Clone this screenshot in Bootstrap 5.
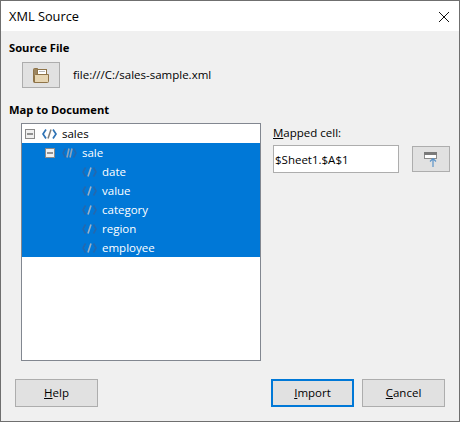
<!DOCTYPE html>
<html lang="en">
<head>
<meta charset="utf-8">
<title>XML Source</title>
<link href="https://cdn.jsdelivr.net/npm/bootstrap@5.3.0/dist/css/bootstrap.min.css" rel="stylesheet">
<style>
html, body { height: 100%; margin: 0; }
body { font-family: "Open Sans", "Noto Sans", "Liberation Sans", sans-serif; font-size: 11.5px; color: #000; background: #f0f0f0; }
.win { width: 460px; height: 422px; border: 1px solid #6f6f6f; background: #f0f0f0; overflow: hidden; }
.titlebar { height: 30px; flex: none; background: #fff; padding-left: 8px; padding-right: 9px; padding-top: 1px; font-size: 12.8px; }
.body-area { height: 389px; padding: 0 9px 0 8px; }
.sect { font-weight: 700; font-size: 11.2px; height: 19px; line-height: 19px; }
.sect-1 { margin-top: 7px; }
.sect-2 { margin-top: 12px; }
.tool-btn { width: 38px; height: 26px; flex: none; background: #e1e1e1; border: 1px solid #adadad; padding: 0; border-radius: 0; }
.file-row { height: 26px; margin-top: 5px; padding-left: 13px; gap: 13px; }
.main-row { margin-top: 4px; padding-left: 12px; }
.tree { width: 240px; height: 238px; flex: none; background: #fff; border: 1px solid #828790; }
.t-row { height: 19px; line-height: 18px; white-space: nowrap; }
.t-sel { background: #0078d7; color: #fff; }
.t-0 { padding-left: 3px; }
.t-1 { padding-left: 23px; }
.t-2 { padding-left: 60px; }
.exp { width: 10px; height: 10px; margin-right: 7px; flex: none; }
.ico { width: 15px; height: 12px; margin-right: 5px; flex: none; }
.side { margin-left: 12px; width: 177px; flex: none; }
.lbl { height: 19px; line-height: 19px; }
.cell-row { margin-top: 3px; gap: 13px; }
.cell-input { width: 126px; height: 28px; flex: none; border: 1px solid #adadad; border-radius: 0; padding: 0 1px; font-size: 11.5px; line-height: 26px; color: #000; background: #fff; box-shadow: none; }
.cell-btn { margin-top: 1px; }
.foot { margin-top: 18px; padding-left: 6px; padding-right: 5px; }
.dlg-btn { width: 83px; height: 28px; background: #e1e1e1; border: 1px solid #adadad; border-radius: 0; padding: 0; font-size: 11.5px; color: #000; line-height: 24px; }
.dlg-def { border: 2px solid #0078d7; }
.dlg-gap { gap: 8px; }
</style>
</head>
<body>
<div class="win d-flex flex-column">
  <div class="titlebar d-flex align-items-center justify-content-between">
    <span>XML Source</span>
    <svg width="12" height="12" viewBox="0 0 12 12" aria-hidden="true"><path d="M1 1l10 10M11 1L1 11" stroke="#111" stroke-width="1" fill="none"/></svg>
  </div>
  <div class="body-area">
    <div class="sect sect-1">Source File</div>
    <div class="file-row d-flex align-items-center">
      <button type="button" class="tool-btn d-flex align-items-center justify-content-center" aria-label="Browse">
        <svg width="16" height="15" viewBox="0 0 16 15" aria-hidden="true">
          <path d="M.5 1.500a1 1 0 0 1 1-1h3l1 1v13h-4a1 1 0 0 1-1-1z" fill="#9c8560" stroke="#8f7448"/>
          <rect x="4.500" y="1.500" width="9" height="5" fill="#fff" stroke="#8f7448"/>
          <path d="M6 3.500h6" stroke="#b9b9b9"/>
          <path d="M2.500 6.500h13v7a1 1 0 0 1-1 1h-13v-7z" fill="#e6d5b2" stroke="#8f7448"/>
        </svg>
      </button>
      <span>file:///C:/sales-sample.xml</span>
    </div>
    <div class="sect sect-2">Map to Document</div>
    <div class="main-row d-flex">
      <div class="tree">
        <div class="t-row t-0 d-flex align-items-center">
          <svg class="exp" viewBox="0 0 10 10" aria-hidden="true"><rect x=".5" y=".5" width="9" height="9" fill="#f0f0f0" stroke="#8a8a8a"/><path d="M2 5h6" stroke="#333"/></svg>
          <svg class="ico" viewBox="0 0 15 12" aria-hidden="true"><path d="M4 1.500L1 6l3 4.500M11 1.500L14 6l-3 4.500" fill="none" stroke="#2f73b5" stroke-width="1.700"/><path d="M9 1.500L6 10.500" stroke="#7c7c7c" stroke-width="1.500"/></svg>
          <span>sales</span>
        </div>
        <div class="t-row t-1 t-sel d-flex align-items-center">
          <svg class="exp" viewBox="0 0 10 10" aria-hidden="true"><rect x=".5" y=".5" width="9" height="9" fill="#f0f0f0" stroke="#8a8a8a"/><path d="M2 5h6" stroke="#333"/></svg>
          <svg class="ico" viewBox="0 0 15 12" aria-hidden="true"><path d="M3.500 1.500L1 6l2.500 4.500M11.500 1.500L14 6l-2.500 4.500" fill="none" stroke="#2468ad" stroke-width="1.600"/><path d="M7 1.500L5 10.500M10 1.500L8 10.500" stroke="#8fa3ba" stroke-width="1.600"/></svg>
          <span>sale</span>
        </div>
        <div class="t-row t-2 t-sel d-flex align-items-center"><svg class="ico" viewBox="0 0 15 12" aria-hidden="true"><path d="M3.500 1.500L1 6l2.500 4.500M11.500 1.500L14 6l-2.500 4.500" fill="none" stroke="#2468ad" stroke-width="1.600"/><path d="M9 1.500L6 10.500" stroke="#9fb0c4" stroke-width="1.600"/></svg><span>date</span></div>
        <div class="t-row t-2 t-sel d-flex align-items-center"><svg class="ico" viewBox="0 0 15 12" aria-hidden="true"><path d="M3.500 1.500L1 6l2.500 4.500M11.500 1.500L14 6l-2.500 4.500" fill="none" stroke="#2468ad" stroke-width="1.600"/><path d="M9 1.500L6 10.500" stroke="#9fb0c4" stroke-width="1.600"/></svg><span>value</span></div>
        <div class="t-row t-2 t-sel d-flex align-items-center"><svg class="ico" viewBox="0 0 15 12" aria-hidden="true"><path d="M3.500 1.500L1 6l2.500 4.500M11.500 1.500L14 6l-2.500 4.500" fill="none" stroke="#2468ad" stroke-width="1.600"/><path d="M9 1.500L6 10.500" stroke="#9fb0c4" stroke-width="1.600"/></svg><span>category</span></div>
        <div class="t-row t-2 t-sel d-flex align-items-center"><svg class="ico" viewBox="0 0 15 12" aria-hidden="true"><path d="M3.500 1.500L1 6l2.500 4.500M11.500 1.500L14 6l-2.500 4.500" fill="none" stroke="#2468ad" stroke-width="1.600"/><path d="M9 1.500L6 10.500" stroke="#9fb0c4" stroke-width="1.600"/></svg><span>region</span></div>
        <div class="t-row t-2 t-sel d-flex align-items-center"><svg class="ico" viewBox="0 0 15 12" aria-hidden="true"><path d="M3.500 1.500L1 6l2.500 4.500M11.500 1.500L14 6l-2.500 4.500" fill="none" stroke="#2468ad" stroke-width="1.600"/><path d="M9 1.500L6 10.500" stroke="#9fb0c4" stroke-width="1.600"/></svg><span>employee</span></div>
      </div>
      <div class="side">
        <div class="lbl"><u>M</u>apped cell:</div>
        <div class="cell-row d-flex align-items-start">
          <input type="text" class="form-control cell-input" value="$Sheet1.$A$1" aria-label="Mapped cell">
          <button type="button" class="tool-btn cell-btn d-flex align-items-center justify-content-center" aria-label="Shrink">
            <svg width="14" height="15" viewBox="0 0 14 15" aria-hidden="true">
              <rect x=".5" y=".5" width="12" height="6" fill="#fff" stroke="#8a8a8a"/>
              <rect x="0" y="0" width="13" height="3" fill="#7a7a7a"/>
              <path d="M9 15V6.500M6 9.500L9 6.500l3 3" fill="none" stroke="#5a93c9" stroke-width="1.200"/>
            </svg>
          </button>
        </div>
      </div>
    </div>
    <div class="foot d-flex justify-content-between">
      <button type="button" class="dlg-btn"><u>H</u>elp</button>
      <div class="d-flex dlg-gap">
        <button type="button" class="dlg-btn dlg-def"><u>I</u>mport</button>
        <button type="button" class="dlg-btn"><u>C</u>ancel</button>
      </div>
    </div>
  </div>
</div>
<script src="https://cdn.jsdelivr.net/npm/bootstrap@5.3.0/dist/js/bootstrap.bundle.min.js"></script>
</body>
</html>
